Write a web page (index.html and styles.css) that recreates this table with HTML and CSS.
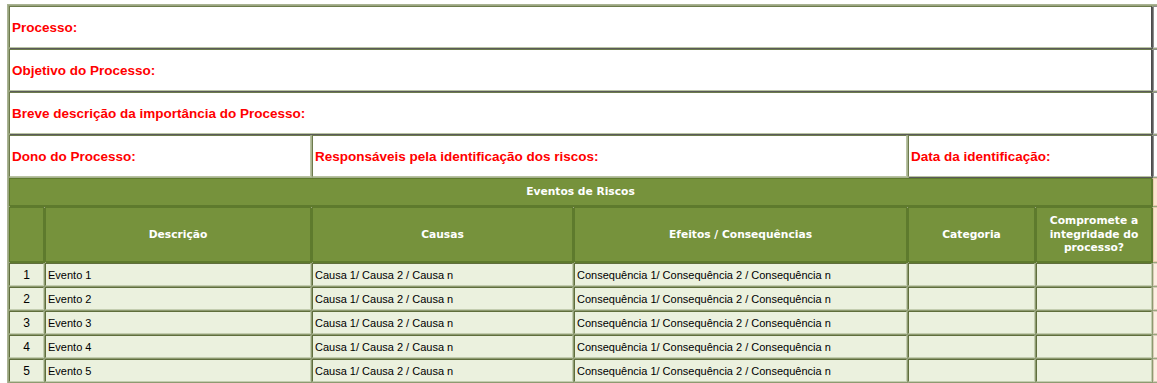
FILE: index.html
```html
<!DOCTYPE html>
<html lang="pt">
<head>
<meta charset="utf-8">
<title>Eventos de Riscos</title>
<link rel="stylesheet" href="styles.css">
</head>
<body>
<table class="sheet">
  <colgroup>
    <col class="c-num">
    <col class="c-desc">
    <col class="c-causa">
    <col class="c-efeito">
    <col class="c-cat">
    <col class="c-comp">
    <col class="c-extra">
  </colgroup>
  <tbody>
    <tr class="r-top">
      <td class="lbl edge" colspan="6">Processo:</td>
      <td class="blank"></td>
    </tr>
    <tr class="r-top">
      <td class="lbl edge" colspan="6">Objetivo do Processo:</td>
      <td class="blank"></td>
    </tr>
    <tr class="r-top">
      <td class="lbl edge" colspan="6">Breve descrição da importância do Processo:</td>
      <td class="blank"></td>
    </tr>
    <tr class="r-top">
      <td class="lbl" colspan="2">Dono do Processo:</td>
      <td class="lbl" colspan="2">Responsáveis pela identificação dos riscos:</td>
      <td class="lbl edge" colspan="2">Data da identificação:</td>
      <td class="blank"></td>
    </tr>
    <tr class="r-title">
      <td class="hd" colspan="6">Eventos de Riscos</td>
      <td class="peach"></td>
    </tr>
    <tr class="r-head">
      <td class="hd"></td>
      <td class="hd">Descrição</td>
      <td class="hd">Causas</td>
      <td class="hd">Efeitos / Consequências</td>
      <td class="hd">Categoria</td>
      <td class="hd wrap">Compromete a integridade do processo?</td>
      <td class="peach"></td>
    </tr>
    <tr class="r-data">
      <td class="dt num">1</td>
      <td class="dt">Evento 1</td>
      <td class="dt">Causa 1/ Causa 2 / Causa n</td>
      <td class="dt">Consequência 1/ Consequência 2 / Consequência n</td>
      <td class="dt"></td>
      <td class="dt"></td>
      <td class="peach-lt"></td>
    </tr>
    <tr class="r-data">
      <td class="dt num">2</td>
      <td class="dt">Evento 2</td>
      <td class="dt">Causa 1/ Causa 2 / Causa n</td>
      <td class="dt">Consequência 1/ Consequência 2 / Consequência n</td>
      <td class="dt"></td>
      <td class="dt"></td>
      <td class="peach-lt"></td>
    </tr>
    <tr class="r-data">
      <td class="dt num">3</td>
      <td class="dt">Evento 3</td>
      <td class="dt">Causa 1/ Causa 2 / Causa n</td>
      <td class="dt">Consequência 1/ Consequência 2 / Consequência n</td>
      <td class="dt"></td>
      <td class="dt"></td>
      <td class="peach-lt"></td>
    </tr>
    <tr class="r-data">
      <td class="dt num">4</td>
      <td class="dt">Evento 4</td>
      <td class="dt">Causa 1/ Causa 2 / Causa n</td>
      <td class="dt">Consequência 1/ Consequência 2 / Consequência n</td>
      <td class="dt"></td>
      <td class="dt"></td>
      <td class="peach-lt"></td>
    </tr>
    <tr class="r-data">
      <td class="dt num">5</td>
      <td class="dt">Evento 5</td>
      <td class="dt">Causa 1/ Causa 2 / Causa n</td>
      <td class="dt">Consequência 1/ Consequência 2 / Consequência n</td>
      <td class="dt"></td>
      <td class="dt"></td>
      <td class="peach-lt"></td>
    </tr>
  </tbody>
</table>
</body>
</html>
```
FILE: styles.css
```css
html, body {
  margin: 0;
  padding: 0;
  background: #ffffff;
  overflow: hidden;
}

.sheet {
  margin: 4px 0 0 7px;
  table-layout: fixed;
  width: 1248px;
  border-collapse: separate;
  border-spacing: 1px;
  border: 1px solid;
  border-color: #a9b393 #55632f #55632f #a9b393;
  background: #9aa57f;
}

.c-num { width: 35px; }
.c-desc { width: 266px; }
.c-causa { width: 261px; }
.c-efeito { width: 333px; }
.c-cat { width: 127px; }
.c-comp { width: 116px; }
.c-extra { width: 100px; }

.sheet td {
  padding: 0 2px;
  border-width: 1px;
  border-style: solid;
  overflow: hidden;
  white-space: nowrap;
}

.r-top { height: 42px; }
.r-title { height: 28px; }
.r-head { height: 55px; }
.r-data { height: 23px; }

.sheet .lbl {
  background: #ffffff;
  border-color: #6d7b4c #b9c3a3 #b9c3a3 #6d7b4c;
  box-shadow: 1px 1px 0 #a7b28f;
  color: #ff0000;
  font: bold 13.5px "Liberation Sans", Arial, sans-serif;
  text-align: left;
}

.sheet .edge {
  border-right-color: #4b4b4b;
  box-shadow: 1px 1px 0 #5a5a5a;
}

.sheet .blank {
  background: #ffffff;
  border-color: #8c8c8c #d0d0d0 #d0d0d0 #8c8c8c;
}

.sheet .hd {
  background: #76923c;
  border-color: #5e7a2d;
  box-shadow: 1px 1px 0 #5e7a2d;
  color: #ffffff;
  font: bold 10.7px "DejaVu Sans", Verdana, sans-serif;
  line-height: 13.5px;
  text-align: center;
}

.sheet .wrap {
  white-space: normal;
}

.sheet .peach {
  background: #fbe3cf;
  border-color: #e9c9ad;
}

.sheet .peach-lt {
  background: #fdeee2;
  border-color: #d9cbb8;
}

.sheet .dt {
  background: #ebf1de;
  border-color: #5f6e3c #c3cdaf #c3cdaf #5f6e3c;
  box-shadow: 1px 1px 0 #8d9a70;
  color: #000000;
  font: 11px "Liberation Sans", Arial, sans-serif;
  text-align: left;
}

.sheet .num {
  text-align: center;
  font-size: 12px;
}
```
